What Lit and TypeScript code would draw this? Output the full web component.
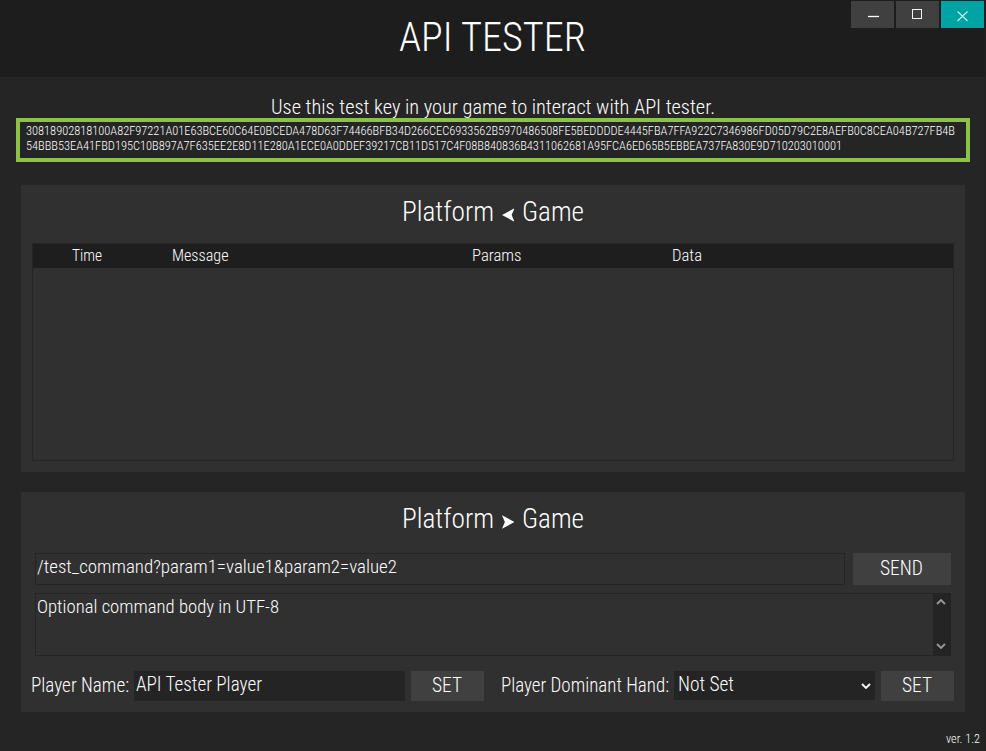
import { LitElement, html, svg, css } from "lit";
import { customElement, property } from "lit/decorators.js";

/* One line of condensed type, set to an exact measure; the box bottom is the baseline. */
@customElement("fit-text")
class FitText extends LitElement {
  @property() text = "";
  @property({ type: Number }) size = 20;
  @property({ type: Number }) measure = 100;
  @property({ type: Number }) weight = 300;
  static styles = css`
    :host { display: block; flex: none; }
    svg { display: block; overflow: visible; }
    text {
      font-family: "Roboto Condensed", Roboto, "Liberation Sans", sans-serif;
      font-stretch: 75%;
      fill: #fff;
      white-space: pre;
    }
  `;
  render() {
    return html`<svg width=${this.measure} height=${this.size}>
      ${svg`<text x="0" y=${this.size} font-size=${this.size} font-weight=${this.weight}
        textLength=${this.measure} lengthAdjust="spacingAndGlyphs">${this.text}</text>`}
    </svg>`;
  }
}

const t = (text: string, size: number, measure: number, weight = 300) =>
  html`<fit-text .text=${text} .size=${size} .measure=${measure} .weight=${weight}></fit-text>`;

@customElement("app-root")
class AppRoot extends LitElement {
  static styles = css`
    :host { display: block; }
    * { box-sizing: border-box; }
    .window { width: 986px; height: 751px; background: #252525; display: flex; flex-direction: column; overflow: hidden; border-right: 1px solid #202020; }
    header { height: 77px; flex: none; background: #1d1d1d; border-bottom: 1px solid #202020; display: grid; grid-template-columns: 399px 1fr auto; }
    .title { grid-column: 2; padding-top: 11px; }
    .controls { display: flex; gap: 2px; padding: 1px 1px 0 0; }
    .ctl { width: 43px; height: 27px; background: #404040; display: block; }
    .ctl.close { background: #00a3a3; }
    .hint { padding: 17px 0 0 271px; height: 41px; flex: none; }
    .key { margin-left: 16px; width: 954px; height: 44px; flex: none; border: 4px solid #8bc34a; padding: 0 0 0 6px; display: flex; flex-direction: column; gap: 2px; }
    .panel { margin-left: 21px; width: 944px; flex: none; background: #303030; }
    .in { margin-top: 23px; height: 287px; padding: 9px 0 0 11px; }
    .out { margin-top: 20px; height: 220px; }
    .heading { display: flex; padding-left: 370px; height: 27px; }
    .heading svg { margin: 13.5px 8px 0 7.5px; width: 12.5px; height: 14px; flex: none; }
    .table { margin-top: 22px; width: 922px; height: 218px; border: 1px solid #252525; }
    .thead { background: #1e1e1e; height: 24px; display: grid; grid-template-columns: 100px 300px 200px 1fr; padding: 1px 0 0 39px; }
    .out .heading { padding: 0 0 0 381px; margin-top: 9px; }
    .command { margin: 25px 0 0 14px; display: flex; gap: 8px; }
    .field { border: 1px solid #242424; width: 810px; height: 32px; padding: 0 0 0 1px; }
    .btn { background: #404040; flex: none; display: flex; justify-content: center; }
    .send { width: 98px; height: 32px; padding: 2.4px 1px 0 0; }
    .body { margin: 8px 0 0 14px; width: 916px; height: 63px; border: 1px solid #242424; display: flex; justify-content: space-between; padding-left: 1px; }
    .scroll { width: 17px; background: #242424; display: flex; flex-direction: column; justify-content: space-between; align-items: center; padding: 5px 1px 6px 0; }
    .player { display: flex; margin: 15px 0 0 10px; height: 30px; }
    .player > fit-text { margin-top: 1.4px; }
    .name { width: 271px; margin: 0 6px 0 5px; background: #242424; padding-left: 2px; }
    .set { width: 73px; height: 30px; padding: 1.4px 1px 0 0; }
    .hand { margin-left: 17px; padding-top: 1.4px; }
    .select { width: 201px; height: 29px; margin: 0 6px 0 5px; background: #242424; padding: 0 4px 0 4px; display: flex; justify-content: space-between; }
    .select svg { margin-top: 11px; }
    .ver { margin: 19px 0 0 946px; }
  `;
  render() {
    const key = [
      "30818902818100A82F97221A01E63BCE60C64E0BCEDA478D63F74466BFB34D266CEC6933562B5970486508FE5BEDDDDE4445FBA7FFA922C7346986FD05D79C2E8AEFB0C8CEA04B727FB4B",
      "54BBB53EA41FBD195C10B897A7F635EE2E8D11E280A1ECE0A0DDEF39217CB11D517C4F08B840836B4311062681A95FCA6ED65B5EBBEA737FA830E9D710203010001",
    ];
    return html`<div class="window">
      <header>
        <div class="title">${t("API TESTER", 40, 187)}</div>
        <div class="controls">
          <svg class="ctl" viewBox="0 0 43 27"><path d="M17 15.5h11" stroke="#fff" stroke-width="1.3" /></svg>
          <svg class="ctl" viewBox="0 0 43 27"><rect x="16.5" y="8.5" width="9" height="9" fill="none" stroke="#f4f4f4" /></svg>
          <svg class="ctl close" viewBox="0 0 43 27"><path d="M16.5 10.5l10 9.5M26.5 10.5l-10 9.5" stroke="#c8eded" stroke-width="1.1" /></svg>
        </div>
      </header>
      <div class="hint">${t("Use this test key in your game to interact with API tester.", 20, 444)}</div>
      <div class="key">${t(key[0], 13, 929, 350)}${t(key[1], 13, 816, 350)}</div>
      <section class="panel in">
        <div class="heading">${t("Platform", 27, 92)}
          <svg viewBox="0 0 13 14"><path d="M0 7L13 0L10 7L13 14Z" fill="#fff" /></svg>${t("Game", 27, 62)}</div>
        <div class="table"><div class="thead">${t("Time", 16, 30)}${t("Message", 16, 56.5)}${t("Params", 16, 49.5)}${t("Data", 16, 30)}</div></div>
      </section>
      <section class="panel out">
        <div class="heading">${t("Platform", 27, 92)}
          <svg viewBox="0 0 13 14"><path d="M13 7L0 0L3 7L0 14Z" fill="#fff" /></svg>${t("Game", 27, 62)}</div>
        <div class="command">
          <div class="field">${t("/test_command?param1=value1&param2=value2", 19, 360)}</div>
          <div class="btn send">${t("SEND", 20, 43)}</div>
        </div>
        <div class="body">${t("Optional command body in UTF-8", 19, 242)}
          <div class="scroll">
            <svg width="10" height="6"><path d="M1 5L5 1L9 5" fill="none" stroke="#999" stroke-width="1.8" /></svg>
            <svg width="10" height="6"><path d="M1 1L5 5L9 1" fill="none" stroke="#999" stroke-width="1.8" /></svg>
          </div>
        </div>
        <div class="player">
          ${t("Player Name:", 20, 98)}
          <div class="name">${t("API Tester Player", 20, 126)}</div>
          <div class="btn set">${t("SET", 20, 30)}</div>
          <div class="hand">${t("Player Dominant Hand:", 20, 168)}</div>
          <div class="select">${t("Not Set", 20, 56)}
            <svg width="10" height="8"><path d="M1 2L5 6L9 2" fill="none" stroke="#fff" stroke-width="1.8" /></svg></div>
          <div class="btn set">${t("SET", 20, 30)}</div>
        </div>
      </section>
      <div class="ver">${t("ver. 1.2", 12, 34, 350)}</div>
    </div>`;
  }
}
